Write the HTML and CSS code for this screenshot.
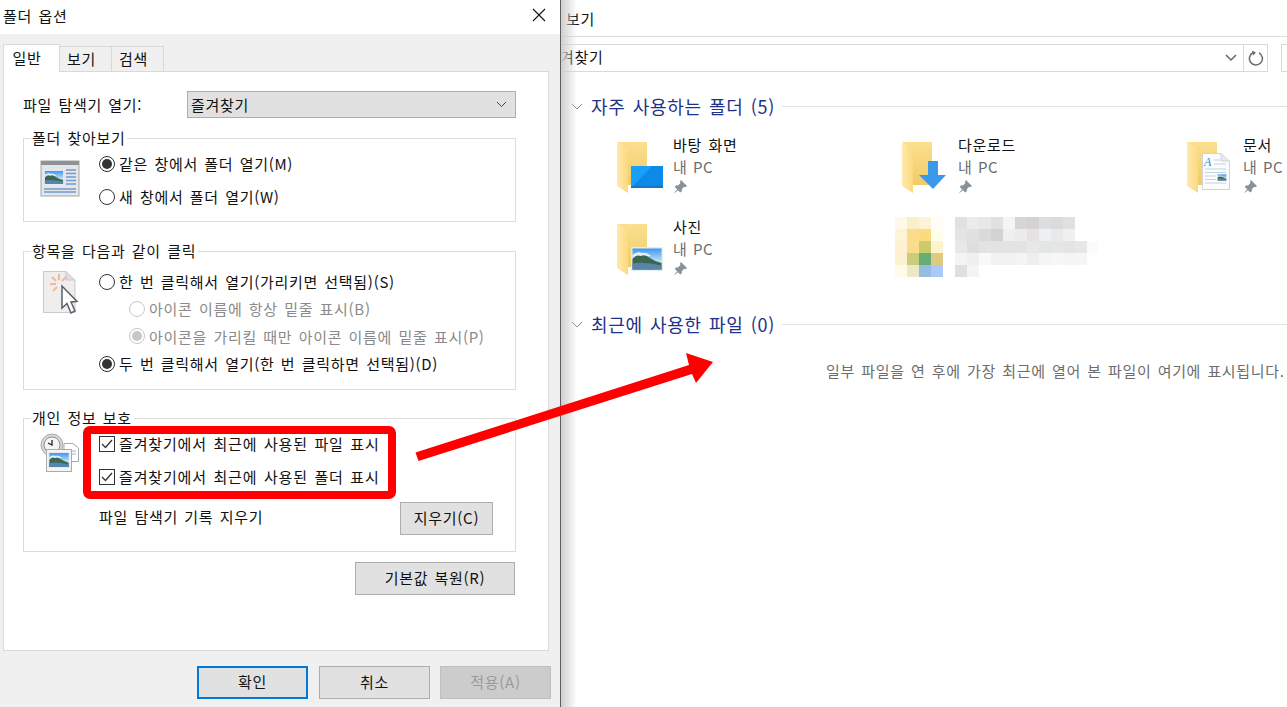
FILE: index.html
```html
<!DOCTYPE html>
<html lang="ko">
<head>
    <meta charset="UTF-8">
    <meta name="viewport" content="width=device-width, initial-scale=1.0">
    <title>폴더 옵션</title>
    <link rel="stylesheet" href="styles.css">
</head>
<body>

    <svg class="defs" width="0" height="0">
        <defs>
            <linearGradient id="folderBack" x1="0" y1="0" x2="0" y2="1">
                <stop offset="0" stop-color="#fbe08f"/>
                <stop offset="1" stop-color="#f1ca66"/>
            </linearGradient>
            <linearGradient id="folderFlap" x1="0" y1="0" x2="1" y2="0">
                <stop offset="0" stop-color="#ffe9ad"/>
                <stop offset="1" stop-color="#fcd97f"/>
            </linearGradient>
            <linearGradient id="sky" x1="0" y1="0" x2="0" y2="1">
                <stop offset="0" stop-color="#3f96f2"/>
                <stop offset="0.6" stop-color="#bfe0f5"/>
            </linearGradient>
            <symbol id="folder" viewBox="0 0 56 56">
                <polygon points="1,1 31,1 31,44 12,44 12,10" fill="url(#folderBack)"/>
                <polygon points="1,1 12,10 12,52 1,45" fill="url(#folderFlap)"/>
            </symbol>
            <symbol id="pin" viewBox="0 0 14 14">
                <path d="M8 0 L14 6 L12.500 7.200 L11.200 6.800 L8.800 9.200 L9 11 L7.200 12.500 L1.800 7 L3.200 5.300 L5 5.500 L7.400 3 L7 1.500 Z M4.300 9.200 L0.500 13.500 L5.200 10.200 Z" fill="#8a9299"/>
            </symbol>
            <symbol id="photo" viewBox="0 0 32 24">
                <rect width="32" height="24" fill="#e6ebee"/>
                <rect x="1.500" y="1.500" width="29" height="21" fill="url(#sky)"/>
                <path d="M1.500 8 Q6 4 11 6 Q16 5 20 9 L1.500 11 Z" fill="#e4f2f6"/>
                <path d="M1.500 12 Q5 7 10 9 Q14 7 19 11 Q25 15 30.500 16 L30.500 22.500 L1.500 22.500 Z" fill="#3d6650"/>
                <path d="M1.500 16.500 Q14 14.500 30.500 18.500 L30.500 22.500 L1.500 22.500 Z" fill="#5585a8"/>
            </symbol>
        </defs>
    </svg>

    <div class="screen">

        <div class="dialog">
            <div class="titlebar">
                <span class="title">폴더 옵션</span>
                <svg class="close" width="14" height="14" viewBox="0 0 14 14">
                    <path d="M1 1 L13 13 M13 1 L1 13" stroke="#111" stroke-width="1.100" fill="none"/>
                </svg>
            </div>

            <div class="tabs">
                <div class="tab active">일반</div>
                <div class="tab">보기</div>
                <div class="tab">검색</div>
            </div>

            <div class="panel">
                <div class="open-row">
                    <span class="open-label">파일 탐색기 열기:</span>
                    <div class="combo">
                        <span>즐겨찾기</span>
                        <svg width="11" height="7" viewBox="0 0 11 7">
                            <path d="M1 1 L5.500 5.500 L10 1" stroke="#444" fill="none"/>
                        </svg>
                    </div>
                </div>

                <fieldset class="group browse">
                    <legend>폴더 찾아보기</legend>
                    <svg class="group-icon" width="40" height="38" viewBox="0 0 40 38">
                        <rect x="1" y="1" width="38" height="35" fill="#e4e6e8" stroke="#a2a4a6"/>
                        <rect x="1" y="1" width="38" height="4" fill="#8e9296"/>
                        <use href="#photo" x="4" y="10" width="20" height="15"/>
                        <path d="M26 10 H36 M26 13.500 H36 M26 17 H36 M26 20.500 H36 M26 24 H36 M4 29 H36 M4 32 H36" stroke="#6f9bd2" stroke-width="1.300"/>
                    </svg>
                    <div class="options">
                        <label class="option"><span class="radio checked"></span>같은 창에서 폴더 열기(M)</label>
                        <label class="option"><span class="radio"></span>새 창에서 폴더 열기(W)</label>
                    </div>
                </fieldset>

                <fieldset class="group click">
                    <legend>항목을 다음과 같이 클릭</legend>
                    <svg class="group-icon" width="38" height="46" viewBox="0 0 38 46">
                        <path d="M1.500 1.500 H24 L33 10 V42.500 H1.500 Z" fill="#eeeeee" stroke="#c9c9c9"/>
                        <path d="M24 1.500 V10 H33" fill="#dedede" stroke="#c9c9c9"/>
                        <path d="M17 4 V10 M10 7 L14 11 M24 7 L20 11 M8 14 H14 M11 21 L15 17" stroke="#f9b795" stroke-width="2"/>
                        <path d="M20 16 V38 L25 33.500 L29 43 L33 41 L29 32 L35 31.500 Z" fill="#fff" stroke="#5a6068" stroke-width="1.500"/>
                    </svg>
                    <div class="options">
                        <label class="option"><span class="radio"></span>한 번 클릭해서 열기(가리키면 선택됨)(S)</label>
                        <label class="option sub disabled"><span class="radio"></span>아이콘 이름에 항상 밑줄 표시(B)</label>
                        <label class="option sub disabled"><span class="radio checked"></span>아이콘을 가리킬 때만 아이콘 이름에 밑줄 표시(P)</label>
                        <label class="option"><span class="radio checked"></span>두 번 클릭해서 열기(한 번 클릭하면 선택됨)(D)</label>
                    </div>
                </fieldset>

                <fieldset class="group privacy">
                    <legend>개인 정보 보호</legend>
                    <svg class="group-icon" width="40" height="40" viewBox="0 0 40 40">
                        <circle cx="12" cy="12" r="11" fill="#d4d6d8" stroke="#a9abad"/>
                        <circle cx="12" cy="12" r="8" fill="#f5f5f5" stroke="#8f9193"/>
                        <path d="M12 7 V12 L8 10" stroke="#222" stroke-width="1.300" fill="none"/>
                        <path d="M24 10.500 H33 L38.500 15 V28.500 H24 Z" fill="#fff" stroke="#a9abad"/>
                        <path d="M27 18 H36 M27 21 H36" stroke="#9fb4c8"/>
                        <rect x="6.500" y="16.500" width="25" height="22" fill="#f4f4f4" stroke="#a9abad"/>
                        <use href="#photo" x="8" y="19" width="22" height="16"/>
                    </svg>
                    <div class="options">
                        <label class="option check"><span class="checkbox"><svg width="12" height="10" viewBox="0 0 12 10"><path d="M1 5 L4.500 8.500 L11 1" stroke="#333" stroke-width="1.300" fill="none"/></svg></span>즐겨찾기에서 최근에 사용된 파일 표시</label>
                        <label class="option check"><span class="checkbox"><svg width="12" height="10" viewBox="0 0 12 10"><path d="M1 5 L4.500 8.500 L11 1" stroke="#333" stroke-width="1.300" fill="none"/></svg></span>즐겨찾기에서 최근에 사용된 폴더 표시</label>
                        <div class="clear-row">
                            <span>파일 탐색기 기록 지우기</span>
                            <button class="btn clear-btn">지우기(C)</button>
                        </div>
                    </div>
                </fieldset>

                <div class="reset-row">
                    <button class="btn reset-btn">기본값 복원(R)</button>
                </div>
            </div>

            <div class="footer">
                <button class="btn footer-btn default">확인</button>
                <button class="btn footer-btn">취소</button>
                <button class="btn footer-btn off">적용(A)</button>
            </div>
        </div>

        <div class="explorer">
            <div class="menubar"><span>보기</span></div>

            <div class="addressbar">
                <div class="address">
                    <span class="path">겨찾기</span>
                    <svg class="addr-chevron" width="12" height="8" viewBox="0 0 12 8">
                        <path d="M1 1 L6 6 L11 1" stroke="#666" stroke-width="1.500" fill="none"/>
                    </svg>
                    <div class="refresh">
                        <svg width="16" height="16" viewBox="0 0 16 16">
                            <path d="M5.500 2.500 A6.500 6.500 0 1 0 11 2.800" stroke="#6b6b6b" stroke-width="1.500" fill="none"/>
                            <path d="M4 0.500 L8 2.500 L5 5.500 Z" fill="#6b6b6b"/>
                        </svg>
                    </div>
                </div>
                <div class="search"></div>
            </div>

            <div class="section-head first">
                <svg width="12" height="7" viewBox="0 0 12 7"><path d="M1 1 L6 6 L11 1" stroke="#8a8a8a" fill="none"/></svg>
                <span class="section-title">자주 사용하는 폴더 <span class="count">(5)</span></span>
                <span class="section-line"></span>
            </div>

            <div class="items">
                <div class="item">
                    <svg class="folder-icon" width="56" height="56" viewBox="0 0 56 56">
                        <use href="#folder" width="56" height="56"/>
                        <rect x="15" y="25" width="32" height="22" fill="#19a0fb"/>
                        <polygon points="15,47 36,25 47,25 47,47" fill="#0c8ae8"/>
                        <rect x="15" y="45" width="32" height="2" fill="#1577c4"/>
                    </svg>
                    <div class="item-text">
                        <div class="item-name">바탕 화면</div>
                        <div class="item-sub">내 PC</div>
                        <svg class="pin" width="14" height="14"><use href="#pin"/></svg>
                    </div>
                </div>
                <div class="item">
                    <svg class="folder-icon" width="56" height="56" viewBox="0 0 56 56">
                        <use href="#folder" width="56" height="56"/>
                        <polygon points="27,20 37,20 37,34 45,34 32,48 18,34 27,34" fill="#3b99ea"/>
                    </svg>
                    <div class="item-text">
                        <div class="item-name">다운로드</div>
                        <div class="item-sub">내 PC</div>
                        <svg class="pin" width="14" height="14"><use href="#pin"/></svg>
                    </div>
                </div>
                <div class="item">
                    <svg class="folder-icon" width="56" height="56" viewBox="0 0 56 56">
                        <use href="#folder" width="56" height="56"/>
                        <path d="M16.500 12.500 H35 L43.500 20 V48.500 H16.500 Z" fill="#fbfcfd" stroke="#cfd3d6"/>
                        <path d="M35 12.500 V20 H43.500" fill="#e6e9eb" stroke="#cfd3d6"/>
                        <text x="18" y="25" class="doc-letter">A</text>
                        <path d="M28 19 H34 M28 23 H40 M19 28 H40 M19 31.500 H40 M19 35 H30 M19 38.500 H30 M19 42 H40" stroke="#c5d2dc"/>
                        <use href="#photo" x="31" y="33" width="10" height="7"/>
                    </svg>
                    <div class="item-text">
                        <div class="item-name">문서</div>
                        <div class="item-sub">내 PC</div>
                        <svg class="pin" width="14" height="14"><use href="#pin"/></svg>
                    </div>
                </div>
                <div class="item">
                    <svg class="folder-icon" width="56" height="56" viewBox="0 0 56 56">
                        <use href="#folder" width="56" height="56"/>
                        <use href="#photo" x="15" y="24" width="32" height="24"/>
                    </svg>
                    <div class="item-text">
                        <div class="item-name">사진</div>
                        <div class="item-sub">내 PC</div>
                        <svg class="pin" width="14" height="14"><use href="#pin"/></svg>
                    </div>
                </div>
                <div class="item blurred">
                    <!-- mosaic over the hidden folder name -->
                    <svg width="204" height="60" viewBox="0 0 204 60" shape-rendering="crispEdges">
                        <g>
                            <rect x="0" y="0" width="12" height="12" fill="#fef9e8"/><rect x="12" y="0" width="12" height="12" fill="#fbeecb"/><rect x="24" y="0" width="12" height="12" fill="#fdf3d8"/><rect x="36" y="0" width="12" height="12" fill="#fffdf8"/>
                            <rect x="0" y="12" width="12" height="12" fill="#fdf3d6"/><rect x="12" y="12" width="12" height="12" fill="#fbdc8a"/><rect x="24" y="12" width="12" height="12" fill="#fcdb7f"/><rect x="36" y="12" width="12" height="12" fill="#fffdec"/>
                            <rect x="0" y="24" width="12" height="12" fill="#fdf1d2"/><rect x="12" y="24" width="12" height="12" fill="#fbdc8a"/><rect x="24" y="24" width="12" height="12" fill="#cbca6c"/><rect x="36" y="24" width="12" height="12" fill="#fef2cf"/>
                            <rect x="0" y="36" width="12" height="12" fill="#fcf1d0"/><rect x="12" y="36" width="12" height="12" fill="#cccd7c"/><rect x="24" y="36" width="12" height="12" fill="#66ae76"/><rect x="36" y="36" width="12" height="12" fill="#decb80"/>
                            <rect x="0" y="48" width="12" height="12" fill="#fefbe9"/><rect x="12" y="48" width="12" height="12" fill="#ebeac7"/><rect x="24" y="48" width="12" height="12" fill="#97bce2"/><rect x="36" y="48" width="12" height="12" fill="#acc8f8"/>
                        </g>
                        <g>
                            <rect x="60" y="0" width="12" height="12" fill="#e1e1e1"/><rect x="72" y="0" width="12" height="12" fill="#ebebeb"/><rect x="84" y="0" width="12" height="12" fill="#e6e8e8"/><rect x="96" y="0" width="12" height="12" fill="#e1e1e0"/><rect x="108" y="0" width="12" height="12" fill="#f5f5f4"/><rect x="120" y="0" width="12" height="12" fill="#d6d6d6"/><rect x="132" y="0" width="12" height="12" fill="#d6d1d3"/><rect x="144" y="0" width="12" height="12" fill="#dddde0"/><rect x="156" y="0" width="12" height="12" fill="#dbdbdc"/><rect x="168" y="0" width="12" height="12" fill="#dfe0e2"/>
                            <rect x="60" y="12" width="12" height="12" fill="#e4e4e4"/><rect x="72" y="12" width="12" height="12" fill="#e2e0e1"/><rect x="84" y="12" width="12" height="12" fill="#dadada"/><rect x="96" y="12" width="12" height="12" fill="#d2d2d2"/><rect x="108" y="12" width="12" height="12" fill="#eef0f0"/><rect x="120" y="12" width="12" height="12" fill="#ececec"/><rect x="132" y="12" width="12" height="12" fill="#e5e2e3"/><rect x="144" y="12" width="12" height="12" fill="#edf1f3"/><rect x="156" y="12" width="12" height="12" fill="#e9e9ea"/><rect x="168" y="12" width="12" height="12" fill="#f0f0f0"/>
                            <rect x="60" y="24" width="12" height="12" fill="#e8e8e7"/><rect x="72" y="24" width="12" height="12" fill="#dedede"/><rect x="84" y="24" width="12" height="12" fill="#e4e3e2"/><rect x="96" y="24" width="12" height="12" fill="#e2e3e5"/><rect x="108" y="24" width="24" height="12" fill="#e3e3e3"/><rect x="132" y="24" width="12" height="12" fill="#e8e8e9"/><rect x="144" y="24" width="12" height="12" fill="#e4e6e6"/><rect x="156" y="24" width="12" height="12" fill="#e6e6e5"/><rect x="168" y="24" width="12" height="12" fill="#e3e5e5"/><rect x="180" y="24" width="12" height="12" fill="#e6e7e6"/><rect x="192" y="24" width="12" height="12" fill="#fafbfd"/>
                            <rect x="60" y="36" width="12" height="12" fill="#f4f4f5"/><rect x="72" y="36" width="12" height="12" fill="#f0f0f1"/><rect x="84" y="36" width="12" height="12" fill="#f9f9f8"/><rect x="96" y="36" width="12" height="12" fill="#f2f2f2"/><rect x="108" y="36" width="12" height="12" fill="#f1f2f2"/><rect x="120" y="36" width="12" height="12" fill="#f4f4f4"/><rect x="132" y="36" width="12" height="12" fill="#eeeeee"/><rect x="144" y="36" width="12" height="12" fill="#f5f5f6"/><rect x="156" y="36" width="12" height="12" fill="#f7f7f7"/><rect x="168" y="36" width="12" height="12" fill="#f5f5f6"/><rect x="180" y="36" width="12" height="12" fill="#f6f6f5"/><rect x="192" y="36" width="12" height="12" fill="#fdfefe"/>
                            <rect x="60" y="48" width="12" height="12" fill="#dde0e1"/><rect x="72" y="48" width="12" height="12" fill="#f2f4f5"/>
                        </g>
                    </svg>
                </div>
            </div>

            <div class="section-head second">
                <svg width="12" height="7" viewBox="0 0 12 7"><path d="M1 1 L6 6 L11 1" stroke="#8a8a8a" fill="none"/></svg>
                <span class="section-title">최근에 사용한 파일 <span class="count">(0)</span></span>
                <span class="section-line"></span>
            </div>

            <p class="empty">일부 파일을 연 후에 가장 최근에 열어 본 파일이 여기에 표시됩니다.</p>
        </div>

        <!-- red markup drawn on top of the screenshot -->
        <svg class="markup" width="1287" height="707" viewBox="0 0 1287 707">
            <rect x="87" y="430" width="305" height="65" rx="3" fill="none" stroke="#ff0000" stroke-width="8"/>
            <polygon points="415.500,452.500 689,365 686,353 713,362 696,383 692,374 418.500,461" fill="#ff0000"/>
        </svg>
    </div>

</body>
</html>
```

FILE: styles.css
```css
* {
    box-sizing: border-box;
}
body {
    margin: 0;
    font-family: "Noto Sans CJK KR", "Noto Sans", sans-serif;
    font-size: 15px;
    letter-spacing: 0.7px;
    word-spacing: 1.5px;
    color: #111;
    background: #fff;
    overflow: hidden;
}
.defs {
    position: absolute;
}
.screen {
    position: relative;
    display: flex;
    width: 1287px;
    height: 707px;
    overflow: hidden;
}

/* dialog */
.dialog {
    width: 561px;
    flex: none;
    height: 707px;
    background: #f0f0f0;
    border-right: 1px solid #5f5f5f;
}
.titlebar {
    display: flex;
    justify-content: space-between;
    align-items: center;
    height: 34px;
    padding: 0 14px 4px 3px;
    background: #fff;
}
.tabs {
    display: flex;
    align-items: flex-end;
    height: 37px;
    padding-left: 3px;
}
.tab {
    width: 52px;
    height: 25px;
    padding-right: 8px;
    line-height: 23px;
    text-align: center;
    background: #f0f0f0;
    border: 1px solid #d9d9d9;
    border-bottom: none;
    border-left: none;
}
.tab.active {
    width: 57px;
    height: 28px;
    padding-right: 9px;
    line-height: 26px;
    margin-bottom: -1px;
    background: #fff;
    border-left: 1px solid #d9d9d9;
    position: relative;
    z-index: 1;
}
.panel {
    width: 546px;
    height: 580px;
    margin-left: 3px;
    padding: 19px 32px 0 19px;
    background: #fff;
    border: 1px solid #d9d9d9;
}
.open-row {
    display: flex;
    align-items: center;
    justify-content: space-between;
    height: 27px;
}
.combo {
    display: flex;
    align-items: center;
    justify-content: space-between;
    width: 329px;
    height: 27px;
    padding: 0 8px 1px 3px;
    background: #e1e1e1;
    border: 1px solid #adadad;
}
.group {
    display: flex;
    margin: 10px 0 0;
    padding: 0;
    min-width: 0;
    border: 1px solid #dcdcdc;
}
.group legend {
    margin-left: 7px;
    padding: 0 2px 0 1px;
    line-height: 20px;
}
.browse {
    height: 94px;
}
.click {
    height: 149px;
    margin-top: 19px;
}
.privacy {
    height: 144px;
    margin-top: 18px;
}
.group-icon {
    position: absolute;
}
.browse .group-icon {
    margin: 12px 0 0 16px;
}
.click .group-icon {
    margin: 9px 0 0 18px;
}
.privacy .group-icon {
    margin: 5px 0 0 16px;
}
.options {
    margin-left: 75px;
    width: 400px;
}
.browse .options {
    margin-top: -1px;
}
.click .options {
    padding-top: 7px;
}
.privacy .options {
    margin-top: -1px;
}
.option {
    display: flex;
    align-items: center;
    gap: 4px;
    height: 33px;
    white-space: nowrap;
}
.click .option {
    height: 27.300px;
}
.option.check {
    letter-spacing: 0.85px;
}
.option.sub {
    margin-left: 30px;
}
.option.disabled {
    color: #8a8a8a;
}
.radio {
    position: relative;
    flex: none;
    width: 16px;
    height: 16px;
    border: 1px solid #333;
    border-radius: 50%;
    background: #fff;
}
.radio.checked::after {
    content: "";
    position: absolute;
    left: 2px;
    top: 2px;
    width: 10px;
    height: 10px;
    border-radius: 50%;
    background: #333;
}
.disabled .radio {
    border-color: #c8c8c8;
}
.disabled .radio.checked::after {
    background: #c8c8c8;
}
.checkbox {
    display: flex;
    align-items: center;
    justify-content: center;
    flex: none;
    width: 16px;
    height: 16px;
    background: #fff;
    border: 1px solid #333;
}
.clear-row {
    display: flex;
    align-items: center;
    justify-content: space-between;
    width: 394px;
    height: 33px;
    margin-top: 7px;
}
.btn {
    font-family: inherit;
    font-size: 15px;
    letter-spacing: inherit;
    word-spacing: inherit;
    color: #111;
    padding: 0 0 2px;
    background: #e1e1e1;
    border: 1px solid #adadad;
}
.clear-btn {
    width: 93px;
    height: 33px;
    margin-top: 4px;
}
.reset-row {
    display: flex;
    justify-content: flex-end;
    margin: 10px 1px 0 0;
}
.reset-btn {
    width: 160px;
    height: 33px;
}
.footer {
    display: flex;
    gap: 11px;
    justify-content: flex-end;
    padding: 15px 9px 0 0;
}
.footer-btn {
    width: 111px;
    height: 33px;
}
.footer-btn.default {
    border: 2px solid #0078d7;
}
.footer-btn.off {
    margin-left: -1px;
    color: #9a9a9a;
    background: #ccc;
    border-color: #bfbfbf;
}

/* explorer window behind it */
.explorer {
    position: relative;
    flex: 1;
    min-width: 0;
}
.explorer::before {
    content: "";
    position: absolute;
    left: 0;
    top: 0;
    bottom: 0;
    width: 16px;
    background: linear-gradient(to right, #cfcfcf, rgba(255, 255, 255, 0));
}
.menubar {
    height: 37px;
    padding: 8px 0 0 5px;
    line-height: 22px;
    border-bottom: 1px solid #dcdcdc;
}
.addressbar {
    display: flex;
    gap: 13px;
    margin-top: 7px;
    height: 28px;
}
.address {
    display: flex;
    align-items: center;
    width: 707px;
    border: 1px solid #d9d9d9;
    border-left: none;
}
.path {
    flex: 1;
    margin: 0 0 3px -1px;
}
.addr-chevron {
    margin-right: 6px;
}
.refresh {
    display: flex;
    align-items: center;
    justify-content: center;
    width: 24px;
    height: 100%;
    border-left: 1px solid #d9d9d9;
}
.search {
    flex: 1;
    border: 1px solid #d9d9d9;
    border-right: none;
}
.section-head {
    display: flex;
    align-items: center;
    height: 24px;
    padding-left: 10px;
}
.section-head.first {
    margin-top: 22px;
}
.section-head.second {
    margin-top: 14px;
}
.section-title {
    margin-left: 8px;
    font-size: 18px;
    line-height: 24px;
    color: #1e3287;
    white-space: nowrap;
}
.section-line {
    flex: 1;
    height: 1px;
    margin-left: 7px;
    background: #e2e2e2;
}
.items {
    display: grid;
    grid-template-columns: repeat(3, 285px);
    grid-auto-rows: 82px;
    width: 900px;
    margin-top: 16px;
    padding-left: 55px;
}
.item {
    display: flex;
    gap: 1px;
}
.folder-icon {
    flex: none;
    margin-top: 7px;
}
.item-name {
    line-height: 22px;
}
.item-sub {
    line-height: 22px;
    letter-spacing: 0.3px;
    color: #6d6d6d;
}
.pin {
    display: block;
    margin-top: 2px;
}
.doc-letter {
    font-family: "Liberation Serif", serif;
    font-style: italic;
    font-size: 12px;
    fill: #2f8ee0;
}
.blurred {
    margin: 1px 0 0 -6px;
}
.empty {
    margin: 24px 0 0;
    padding-left: 265px;
    line-height: 22px;
    letter-spacing: 0.65px;
    color: #6d6d6d;
    white-space: nowrap;
}
.markup {
    position: absolute;
    left: 0;
    top: 0;
    pointer-events: none;
}
```
